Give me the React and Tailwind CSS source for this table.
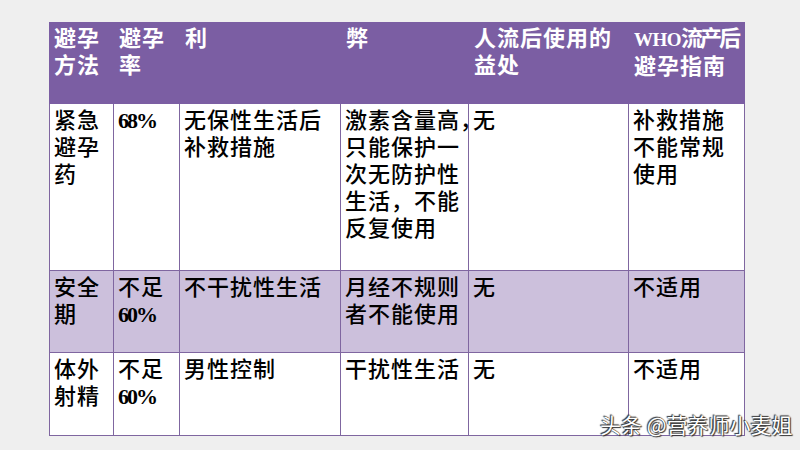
import React from 'react';

const header = [
  ['避孕', '方法'],
  ['避孕', '率'],
  ['利'],
  ['弊'],
  ['人流后使用的', '益处'],
  ['WHO流产后', '避孕指南'],
];

const rows = [
  {
    bg: 'bg-white',
    cells: [
      ['紧急', '避孕', '药'],
      ['68%'],
      ['无保性生活后', '补救措施'],
      ['激素含量高，', '只能保护一', '次无防护性', '生活，不能', '反复使用'],
      ['无'],
      ['补救措施', '不能常规', '使用'],
    ],
  },
  {
    bg: 'bg-[#ccc0dc]',
    cells: [
      ['安全', '期'],
      ['不足', '60%'],
      ['不干扰性生活'],
      ['月经不规则', '者不能使用'],
      ['无'],
      ['不适用'],
    ],
  },
  {
    bg: 'bg-white',
    cells: [
      ['体外', '射精'],
      ['不足', '60%'],
      ['男性控制'],
      ['干扰性生活'],
      ['无'],
      ['不适用'],
    ],
  },
];

// latin runs get a narrower serif setting, the trailing comma hangs into the border
function Txt({ s, latin }) {
  const parts = s.split(/([A-Za-z0-9%]+|，$)/);
  return parts.map((p, i) => {
    if (/^[A-Za-z0-9%]+$/.test(p))
      return <span key={i} className={latin}>{p}</span>;
    if (p === '，')
      return <span key={i} className="inline-block w-[6px] overflow-visible tracking-normal">{p}</span>;
    return <React.Fragment key={i}>{p}</React.Fragment>;
  });
}

function Lines({ lines, squeeze, latin }) {
  return lines.map((l, i) => (
    <div key={i} className={`whitespace-nowrap ${squeeze && i === 0 ? 'tracking-[-3px]' : ''}`}>
      <Txt s={l} latin={latin} />
    </div>
  ));
}

export default function App() {
  return (
    <div className="relative w-[800px] h-[450px] bg-[#efefef] pl-[49px] pt-[22px] font-['Liberation_Serif','Noto_Sans_CJK_SC',serif] text-[22px] leading-[27px] tracking-[1px]">
      <div className="grid w-[696px] grid-cols-[65px_66px_161px_128px_160px_116px] grid-rows-[82px_167px_82px_83px]">
        {header.map((h, i) => (
          <div key={i} className="bg-[#7b5ea3] px-[5px] pt-[3px] font-bold text-white">
            <Lines lines={h} squeeze={i === 5} latin="text-[19px] tracking-[-0.5px]" />
          </div>
        ))}
        {rows.map((r, ri) =>
          r.cells.map((c, ci) => (
            <div
              key={`${ri}-${ci}`}
              className={`${r.bg} ${ci === 0 ? 'border-l' : ''} border-r border-b border-[#7f66a0] px-[4px] pt-[3px] font-medium text-black`}
            >
              <Lines lines={c} latin="text-[22px] font-bold tracking-[-2px]" />
            </div>
          ))
        )}
      </div>
      <div className="absolute left-[600px] top-[411px] whitespace-nowrap font-['Noto_Sans_CJK_SC',sans-serif] text-[21px] leading-[26px] tracking-normal text-white [text-shadow:0_0_1px_#222,1px_1px_1px_#333,-1px_-1px_1px_#333]">
        头条 @营养师小麦姐
      </div>
    </div>
  );
}
